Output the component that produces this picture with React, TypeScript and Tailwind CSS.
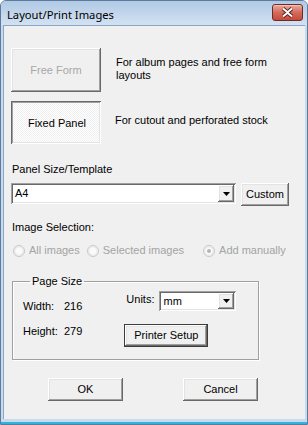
import React from "react";
import clsx from "clsx";

const raised =
  "bg-[#f0f0f0] shadow-[inset_-1px_-1px_0_#696969,inset_1px_1px_0_#ffffff,inset_-2px_-2px_0_#a0a0a0,inset_2px_2px_0_#e3e3e3]";
const sunken =
  "bg-white shadow-[inset_1px_1px_0_#a0a0a0,inset_-1px_-1px_0_#ffffff,inset_2px_2px_0_#696969,inset_-2px_-2px_0_#e3e3e3]";

function Button({
  children,
  className,
  disabled,
  isDefault,
}: {
  children: React.ReactNode;
  className?: string;
  disabled?: boolean;
  isDefault?: boolean;
}) {
  return (
    <div
      className={clsx(
        "flex items-center justify-center",
        isDefault ? "border border-[#3c3c3c]" : "",
        className
      )}
    >
      <div
        className={clsx(
          "w-full h-full flex items-center justify-center",
          raised,
          disabled ? "text-[#a8a8a8]" : "text-black"
        )}
      >
        {children}
      </div>
    </div>
  );
}

function Combo({ value, className }: { value: string; className?: string }) {
  return (
    <div className={clsx("flex items-center p-[2px]", sunken, className)}>
      <span className="flex-1 pl-[2px] leading-[13px]">{value}</span>
      <div className={clsx("w-[16px] h-full flex items-center justify-center", raised)}>
        <svg width="7" height="4" viewBox="0 0 7 4">
          <path d="M0 0h7L3.5 4z" fill="#000" />
        </svg>
      </div>
    </div>
  );
}

function Radio({ label, checked }: { label: string; checked?: boolean }) {
  return (
    <div className="flex items-center gap-[4px] text-[#a3a3a3]">
      <svg width="12" height="12" viewBox="0 0 12 12">
        <circle cx="6" cy="6" r="5.5" fill="#f4f4f4" stroke="#c8c8c8" />
        <circle cx="6" cy="6" r="4.2" fill="#fafafa" stroke="#e2e2e2" strokeWidth="0.8" />
        {checked && <circle cx="6" cy="6" r="2" fill="#b4b4b4" />}
      </svg>
      <span>{label}</span>
    </div>
  );
}

export default function App() {
  return (
    <div className="w-[308px] h-[425px] flex flex-col bg-[#c7daee] border border-[#5e7a9c] rounded-t-[6px] overflow-hidden font-['Liberation_Sans',Arial,sans-serif] text-[11px] text-black">
      {/* title bar */}
      <div className="h-[24px] shrink-0 flex items-center justify-between pl-[6px] pr-[4px] bg-gradient-to-b from-[#b0c9e4] to-[#d3e2f2]">
        <span className="font-['Noto_Sans',sans-serif] text-[11.2px] leading-[16px] mt-[4px]">
          Layout/Print Images
        </span>
        <div className="w-[31px] h-[17px] mt-[-2px] rounded-[3px] border border-[#6d2a26] bg-gradient-to-b from-[#e9a99c] via-[#d46a5c] to-[#c54a3b] flex items-center justify-center shadow-[inset_0_1px_0_#f3c3b9]">
          <svg width="13" height="11" viewBox="0 0 13 11">
            <path
              d="M2 1.5l4.5 3.8L11 1.5M2 9.5l4.5-3.8L11 9.5"
              stroke="#4a1a16"
              strokeWidth="3.6"
              fill="none"
            />
            <path
              d="M2 1.5l4.5 3.8L11 1.5M2 9.5l4.5-3.8L11 9.5"
              stroke="#ffffff"
              strokeWidth="2"
              fill="none"
            />
          </svg>
        </div>
      </div>

      {/* client area */}
      <div className="flex-1 mx-[2px] mb-[3px] bg-[#f0f0f0] border-l border-t border-[#8aa6c6] pl-[7px] pt-[22px] flex flex-col">
        <div className="flex items-center">
          <Button disabled className="w-[90px] h-[44px]">
            Free Form
          </Button>
          <p className="ml-[15px] leading-[13px] mt-[-3px]">
            For album pages and free form
            <br />
            layouts
          </p>
        </div>

        <div className="flex items-start mt-[9px]">
          <div
            className={clsx(
              "w-[90px] h-[43px] flex items-center justify-center pt-[2px] pl-[2px]",
              "bg-[image:repeating-conic-gradient(#ffffff_0%_25%,#f0f0f0_0%_50%)] bg-[length:2px_2px]",
              "shadow-[inset_1px_1px_0_#696969,inset_-1px_-1px_0_#ffffff,inset_2px_2px_0_#a0a0a0,inset_-2px_-2px_0_#e3e3e3]"
            )}
          >
            Fixed Panel
          </div>
          <p className="ml-[14px] mt-[13px] leading-[13px]">For cutout and perforated stock</p>
        </div>

        <p className="mt-[19px] leading-[13px] pl-[1px]">Panel Size/Template</p>
        <div className="flex items-start mt-[7px]">
          <Combo value="A4" className="w-[225px] h-[21px]" />
          <Button className="ml-[5px] w-[48px] h-[23px]">Custom</Button>
        </div>

        <p className="mt-[15px] leading-[13px] pl-[1px]">Image Selection:</p>
        <div className="flex items-center mt-[10px] pl-[2px] leading-[13px]">
          <Radio label="All images" />
          <div className="ml-[7px]">
            <Radio label="Selected images" />
          </div>
          <div className="ml-[19px]">
            <Radio label="Add manually" checked />
          </div>
        </div>

        <fieldset className="mt-[18px] ml-[1px] w-[247px] border border-[#a0a0a0] shadow-[1px_1px_0_#ffffff,inset_1px_1px_0_#ffffff] px-[10px] pb-[12px]">
          <legend className="ml-[7px] px-[2px] leading-[13px]">Page Size</legend>
          <div className="flex">
            <div className="flex flex-col gap-[12px] pt-[12px] leading-[13px]">
              <div className="flex">
                <span className="w-[41px]">Width:</span>
                <span>216</span>
              </div>
              <div className="flex">
                <span className="w-[41px]">Height:</span>
                <span>279</span>
              </div>
            </div>
            <div className="ml-[42px] flex flex-col pt-[3px]">
              <div className="flex items-center">
                <span className="ml-[2px] mt-[-4px]">Units:</span>
                <Combo value="mm" className="ml-[5px] w-[77px] h-[20px]" />
              </div>
              <Button isDefault className="mt-[13px] w-[84px] h-[23px]">
                Printer Setup
              </Button>
            </div>
          </div>
        </fieldset>

        <div className="flex mt-[18px] ml-[37px]">
          <Button className="w-[75px] h-[23px]">OK</Button>
          <Button className="ml-[60px] w-[75px] h-[23px]">Cancel</Button>
        </div>
      </div>
      <div className="h-[2px] shrink-0 bg-[#2db4dc]" />
    </div>
  );
}
